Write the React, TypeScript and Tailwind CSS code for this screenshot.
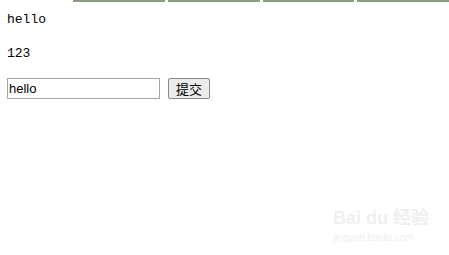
import React from "react";

export default function App() {
  return (
    <div className="w-[449px] h-[255px] bg-white relative overflow-hidden">
      <div className="flex h-[2px] gap-[3px] pl-[73px]">
        <div className="w-[92px] bg-[#8c9c84]" />
        <div className="w-[92px] bg-[#8c9c84]" />
        <div className="w-[92px] bg-[#8c9c84]" />
        <div className="w-[92px] bg-[#8c9c84]" />
      </div>
      <div className="pl-[7px] pt-[10px] text-[13px] leading-[16px] text-black" style={{ fontFamily: '"Liberation Mono", "Noto Sans CJK SC", monospace' }}>
        <p>hello</p>
        <p className="mt-[18px]">123</p>
      </div>
      <div className="flex items-center gap-[8px] pl-[7px] mt-[16px]">
        <input
          defaultValue="hello"
          className="w-[153px] h-[21px] border border-[#a5a5a5] px-[1px] text-[13px] text-black outline-none"
          style={{ fontFamily: '"Liberation Sans", Arial, sans-serif' }}
        />
        <button
          className="h-[21px] w-[42px] border border-[#8a8a8a] bg-[#ececec] text-[13px] text-black rounded-[2px]"
          style={{ fontFamily: '"Noto Sans CJK SC", sans-serif' }}
        >
          提交
        </button>
      </div>
      <div className="absolute left-[333px] top-[205px] text-[#efefef] text-[18px] font-bold" style={{ fontFamily: '"Liberation Sans", "Noto Sans CJK SC", sans-serif' }}>
        Bai du 经验
      </div>
      <div className="absolute left-[333px] top-[230px] text-[#f0f0f0] text-[10px]" style={{ fontFamily: '"Liberation Sans", sans-serif' }}>
        jingyan.baidu.com
      </div>
    </div>
  );
}
